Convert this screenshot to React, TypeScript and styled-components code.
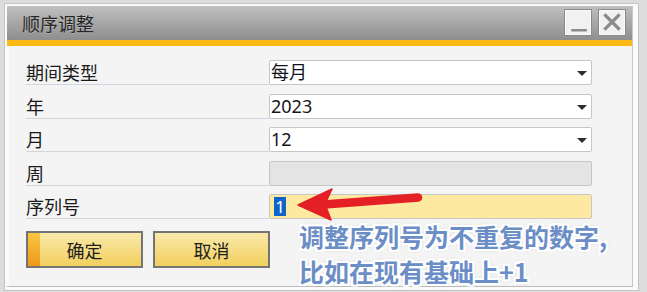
import React from "react";
import styled, { createGlobalStyle } from "styled-components";

const Global = createGlobalStyle`
  html, body { margin: 0; padding: 0; background: #dcdcdc; }
  body { width: 647px; height: 292px; overflow: hidden; }
  * { box-sizing: border-box; }
`;

const Page = styled.div`
  width: 647px;
  height: 292px;
  padding: 3px 0 0 4px;
  font-family: "Noto Sans CJK SC", "Noto Sans", sans-serif;
`;

const Frame = styled.div`
  width: 635px;
  height: 288px;
  background: #fbfbfb;
  border: 1px solid #c4c4c4;
  padding: 2px 4px 2px 2px;
`;

const Window = styled.div`
  width: 626px;
  height: 281px;
  display: flex;
  flex-direction: column;
  background: #f4f4f4;
  border-bottom: 1px solid #bdbdbd;
  border-right: 1px solid #c6c6c6;
`;

const TitleBar = styled.div`
  height: 34px;
  flex: none;
  display: flex;
  align-items: flex-start;
  justify-content: space-between;
  padding: 3px 6px 0 15px;
  background: linear-gradient(#c0c0c0, #8e8e8e);
`;

const Title = styled.div`
  font-size: 18px;
  line-height: 28px;
  color: #262626;
  text-shadow: 0 1px 0 rgba(255, 255, 255, 0.25);
`;

const TitleButtons = styled.div`
  display: flex;
  gap: 6px;
`;

const WinButton = styled.div`
  width: 28px;
  height: 27px;
  background: #f1f1f1;
  border: 1px solid #8a8a8a;
  box-shadow: inset 0 0 0 1px #fafafa;
  display: flex;
  align-items: center;
  justify-content: center;
`;

const Accent = styled.div`
  height: 6px;
  flex: none;
  background: #fdb913;
`;

const Body = styled.div`
  position: relative;
  flex: 1;
  padding: 14px 0 0 17px;
  border-left: 2px solid #fafafa;
`;

const Form = styled.div`
  display: grid;
  grid-template-columns: 243px 323px;
  grid-auto-rows: 25px;
  row-gap: 8.5px;
`;

const Label = styled.div`
  font-size: 18px;
  line-height: 25px;
  color: #1a1a1a;
  border-bottom: 1px solid #cfd6dd;
  white-space: nowrap;
`;

const Field = styled.div<{ $tone?: "white" | "disabled" | "active" }>`
  position: relative;
  height: 25px;
  border: 1px solid #c6c6c6;
  border-radius: 2px;
  background: ${(p) =>
    p.$tone === "disabled" ? "#e4e4e4" : p.$tone === "active" ? "#fde99f" : "#ffffff"};
  display: flex;
  align-items: center;
  padding-left: 1px;
  font-family: "Noto Sans", "Noto Sans CJK SC", sans-serif;
  font-size: 18px;
  line-height: 23px;
  color: #141420;
`;

const Arrow = styled.span`
  position: absolute;
  right: 4px;
  top: 10px;
  width: 0;
  height: 0;
  border-left: 5px solid transparent;
  border-right: 5px solid transparent;
  border-top: 5px solid #2e2e2e;
`;

const Selected = styled.span`
  margin-left: 3px;
  height: 19px;
  width: 12px;
  display: inline-flex;
  align-items: center;
  justify-content: center;
  background: #0c63c9;
  color: #ffffff;
  font-size: 17px;
  line-height: 19px;
`;

const Buttons = styled.div`
  display: flex;
  gap: 10px;
  margin-top: 12px;
`;

const Button = styled.div<{ $primary?: boolean }>`
  position: relative;
  width: 117px;
  height: 37px;
  border: 2px solid #747474;
  background: linear-gradient(#f9e8aa, #f2d05e);
  display: flex;
  align-items: center;
  justify-content: center;
  font-size: 18px;
  color: #1e1e1e;
  ${(p) =>
    p.$primary
      ? `&::before {
          content: "";
          position: absolute;
          left: 0; top: 0; bottom: 0;
          width: 12px;
          background: linear-gradient(#f8c63e, #ee981b);
        }`
      : ""}
`;

const ButtonText = styled.span`
  position: relative;
`;

const Note = styled.div`
  position: absolute;
  left: 290px;
  top: 173px;
  font-family: "Noto Sans CJK SC", sans-serif;
  font-weight: 700;
  font-size: 25px;
  line-height: 35px;
  color: #6b8ec6;
  white-space: nowrap;
  text-shadow:
    2px 0 0 #fff, -2px 0 0 #fff, 0 2px 0 #fff, 0 -2px 0 #fff,
    2px 2px 0 #fff, -2px -2px 0 #fff, 2px -2px 0 #fff, -2px 2px 0 #fff,
    0 0 4px rgba(0, 0, 0, 0.25);
`;

const Overlay = styled.svg`
  position: absolute;
  left: -2px;
  top: 0;
  pointer-events: none;
`;

const rows: { label: string; value?: string; tone?: "white" | "disabled" | "active"; drop?: boolean; sel?: boolean }[] = [
  { label: "期间类型", value: "每月", drop: true },
  { label: "年", value: "2023", drop: true },
  { label: "月", value: "12", drop: true },
  { label: "周", tone: "disabled" },
  { label: "序列号", tone: "active", sel: true },
];

export default function App() {
  return (
    <Page>
      <Global />
      <Frame>
        <Window>
          <TitleBar>
            <Title>顺序调整</Title>
            <TitleButtons>
              <WinButton>
                <svg width="26" height="25" viewBox="0 0 26 25">
                  <rect x="6" y="19" width="16" height="2.5" rx="1" fill="#8a8a8a" />
                </svg>
              </WinButton>
              <WinButton>
                <svg width="26" height="25" viewBox="0 0 26 25">
                  <path d="M6.5 5.5 L19.5 18.5 M19.5 5.5 L6.5 18.5" stroke="#8a8a8a" strokeWidth="3.2" strokeLinecap="square" />
                </svg>
              </WinButton>
            </TitleButtons>
          </TitleBar>
          <Accent />
          <Body>
            <Form>
              {rows.map((r) => (
                <React.Fragment key={r.label}>
                  <Label>{r.label}</Label>
                  <Field $tone={r.tone}>
                    {r.value}
                    {r.sel && <Selected>1</Selected>}
                    {r.drop && <Arrow />}
                  </Field>
                </React.Fragment>
              ))}
            </Form>
            <Buttons>
              <Button $primary>
                <ButtonText>确定</ButtonText>
              </Button>
              <Button>
                <ButtonText>取消</ButtonText>
              </Button>
            </Buttons>
            <Overlay width="626" height="240" viewBox="0 0 626 240">
              <g transform="translate(-7 -47)">
                <line x1="324" y1="205.5" x2="418" y2="198.5" stroke="#e41f26" strokeWidth="8.5" strokeLinecap="round" />
                <path d="M298 206 L332 190 L325 205 L331 221 Z" fill="#e41f26" stroke="#e41f26" strokeWidth="1.5" strokeLinejoin="round" />
              </g>
            </Overlay>
            <Note>
              调整序列号为不重复的数字,
              <br />
              比如在现有基础上+1
            </Note>
          </Body>
        </Window>
      </Frame>
    </Page>
  );
}
